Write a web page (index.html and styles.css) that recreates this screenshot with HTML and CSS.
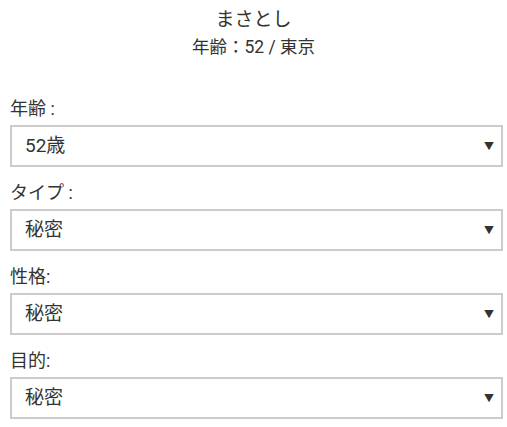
FILE: index.html
```html
<!DOCTYPE html>
<html lang="ja">
<head>
<meta charset="utf-8">
<link rel="stylesheet" href="styles.css">
</head>
<body>
<header class="profile">
  <div class="name">まさとし</div>
  <div class="meta">年齢：52 / 東京</div>
</header>
<form class="form">
  <div class="field">
    <label class="label">年齢 :</label>
    <div class="select"><span>52歳</span><span class="arrow">▼</span></div>
  </div>
  <div class="field">
    <label class="label">タイプ :</label>
    <div class="select"><span>秘密</span><span class="arrow">▼</span></div>
  </div>
  <div class="field">
    <label class="label">性格:</label>
    <div class="select"><span>秘密</span><span class="arrow">▼</span></div>
  </div>
  <div class="field">
    <label class="label">目的:</label>
    <div class="select"><span>秘密</span><span class="arrow">▼</span></div>
  </div>
</form>
</body>
</html>
```
FILE: styles.css
```css
html, body {
  margin: 0;
  background: #fff;
}
body {
  font-family: "Roboto", "Noto Sans CJK JP", sans-serif;
  color: #333;
  padding: 8px 4px 0 10px;
}
.profile {
  text-align: center;
  padding-right: 6px;
}
.name {
  font-size: 19px;
  line-height: 24px;
  color: #333;
}
.meta {
  font-size: 17.5px;
  line-height: 22px;
  margin-top: 4px;
  color: #333;
}
.form {
  margin-top: 39px;
  display: flex;
  flex-direction: column;
  gap: 14px;
}
.field {
  display: flex;
  flex-direction: column;
  gap: 4px;
}
.label {
  font-size: 18px;
  line-height: 24px;
  color: #333;
}
.select {
  height: 42px;
  box-sizing: border-box;
  border: 2px solid #ccc;
  display: flex;
  align-items: center;
  justify-content: space-between;
  padding: 0 7px 5px 13px;
  font-size: 19px;
  color: #333;
  background: #fff;
}
.arrow {
  font-size: 10px;
  color: #333;
  padding-top: 3px;
}
```
